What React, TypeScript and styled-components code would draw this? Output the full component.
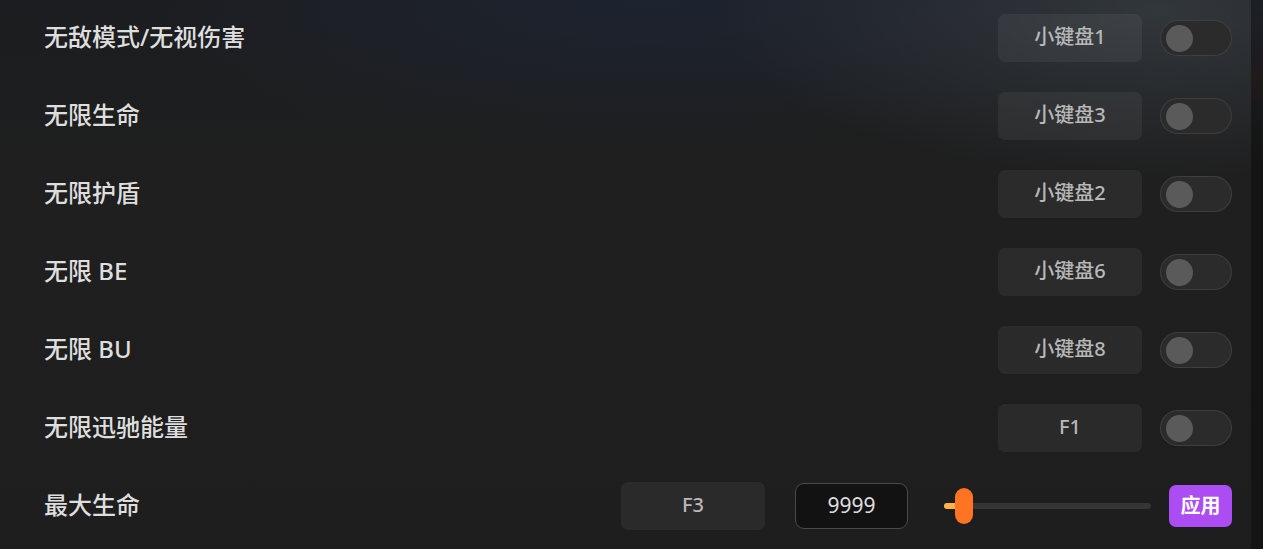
import React, { useState } from 'react';
import styled, { createGlobalStyle } from 'styled-components';

const GlobalStyle = createGlobalStyle`
  html, body {
    margin: 0;
    padding: 0;
    background: #141414;
    overflow: hidden;
  }
  * { box-sizing: border-box; }
`;

const Page = styled.div`
  display: flex;
  width: 1263px;
  height: 549px;
  font-family: "Noto Sans", "Noto Sans CJK SC", sans-serif;
  background: #131313;
`;

const Panel = styled.div`
  flex: 0 0 1251px;
  height: 549px;
  overflow: hidden;
  background:
    radial-gradient(ellipse 440px 170px at 1160px 10px, rgba(64, 72, 78, 0.6), rgba(64, 72, 78, 0) 100%),
    radial-gradient(ellipse 520px 150px at 650px 0px, rgba(30, 40, 58, 0.6), rgba(30, 40, 58, 0) 100%),
    linear-gradient(180deg, #1c1d20 0px, #1f1f1f 200px, #1e1e1e 100%);
`;

const Edge = styled.div`
  flex: 1;
  background: linear-gradient(180deg, #1b2027 0px, #1c1b1f 60px, #221a1b 75px, #171819 110px, #141414 160px);
`;

const List = styled.div`
  display: flex;
  flex-direction: column;
  margin-top: -1px;
  padding: 0 19px 0 44px;
`;

const Row = styled.div`
  display: flex;
  align-items: center;
  height: 78px;
`;

const Label = styled.div`
  flex: 1;
  font-size: 24px;
  line-height: 1;
  padding-bottom: 3px;
  font-weight: 500;
  color: #dedede;
`;

const HotKey = styled.div`
  display: flex;
  align-items: center;
  justify-content: center;
  width: 144px;
  height: 48px;
  padding-bottom: 3px;
  line-height: 1;
  border-radius: 7px;
  background: rgba(255, 255, 255, 0.055);
  color: #b8b8b8;
  font-size: 20px;
  font-weight: 500;
`;

const Switch = styled.button<{ $on: boolean }>`
  position: relative;
  width: 72px;
  height: 36px;
  margin-left: 18px;
  padding: 0;
  border-radius: 18px;
  border: 1px solid rgba(255, 255, 255, 0.09);
  background: ${p => (p.$on ? '#ff7422' : '#2b2b2b')};
  cursor: pointer;

  &::after {
    content: '';
    position: absolute;
    top: 4px;
    left: ${p => (p.$on ? '39px' : '5px')};
    width: 27px;
    height: 27px;
    border-radius: 50%;
    background: #5a5a5a;
  }
`;

const ValueBox = styled.div`
  display: flex;
  align-items: center;
  justify-content: center;
  width: 113px;
  height: 46px;
  margin-left: 30px;
  padding-bottom: 1px;
  line-height: 1;
  border: 1.5px solid #4a4a4a;
  border-radius: 9px;
  background: #121212;
  color: #dedede;
  font-size: 21px;
`;

const Slider = styled.div`
  position: relative;
  width: 207px;
  height: 36px;
  margin-left: 36px;
  display: flex;
  align-items: center;
`;

const Track = styled.div`
  width: 100%;
  height: 6px;
  border-radius: 3px;
  background: #353535;
  overflow: hidden;
`;

const Fill = styled.div`
  height: 100%;
  background: #ffb347;
`;

const Thumb = styled.div`
  position: absolute;
  top: 0;
  width: 18px;
  height: 36px;
  border-radius: 9px;
  background: #ff7422;
`;

const ApplyButton = styled.button`
  width: 63px;
  height: 42px;
  margin-left: 18px;
  padding: 0 0 3px;
  line-height: 1;
  border: none;
  border-radius: 7px;
  background: #ac4cf3;
  color: #ffffff;
  font-family: "Noto Sans CJK SC", sans-serif;
  font-size: 20px;
  font-weight: 700;
  cursor: pointer;
`;

const cheats = [
  { name: '无敌模式/无视伤害', key: '小键盘1' },
  { name: '无限生命', key: '小键盘3' },
  { name: '无限护盾', key: '小键盘2' },
  { name: '无限 BE', key: '小键盘6' },
  { name: '无限 BU', key: '小键盘8' },
  { name: '无限迅驰能量', key: 'F1' },
];

const App = () => {
  const [on, setOn] = useState<boolean[]>(cheats.map(() => false));
  const thumbLeft = 11;

  return (
    <Page>
      <GlobalStyle />
      <Panel>
        <List>
          {cheats.map((c, i) => (
            <Row key={c.name}>
              <Label>{c.name}</Label>
              <HotKey>{c.key}</HotKey>
              <Switch
                $on={on[i]}
                onClick={() => setOn(on.map((v, j) => (j === i ? !v : v)))}
              />
            </Row>
          ))}
          <Row>
            <Label>最大生命</Label>
            <HotKey>F3</HotKey>
            <ValueBox>9999</ValueBox>
            <Slider>
              <Track>
                <Fill style={{ width: thumbLeft + 4 }} />
              </Track>
              <Thumb style={{ left: thumbLeft }} />
            </Slider>
            <ApplyButton>应用</ApplyButton>
          </Row>
        </List>
      </Panel>
      <Edge />
    </Page>
  );
};

export default App;
